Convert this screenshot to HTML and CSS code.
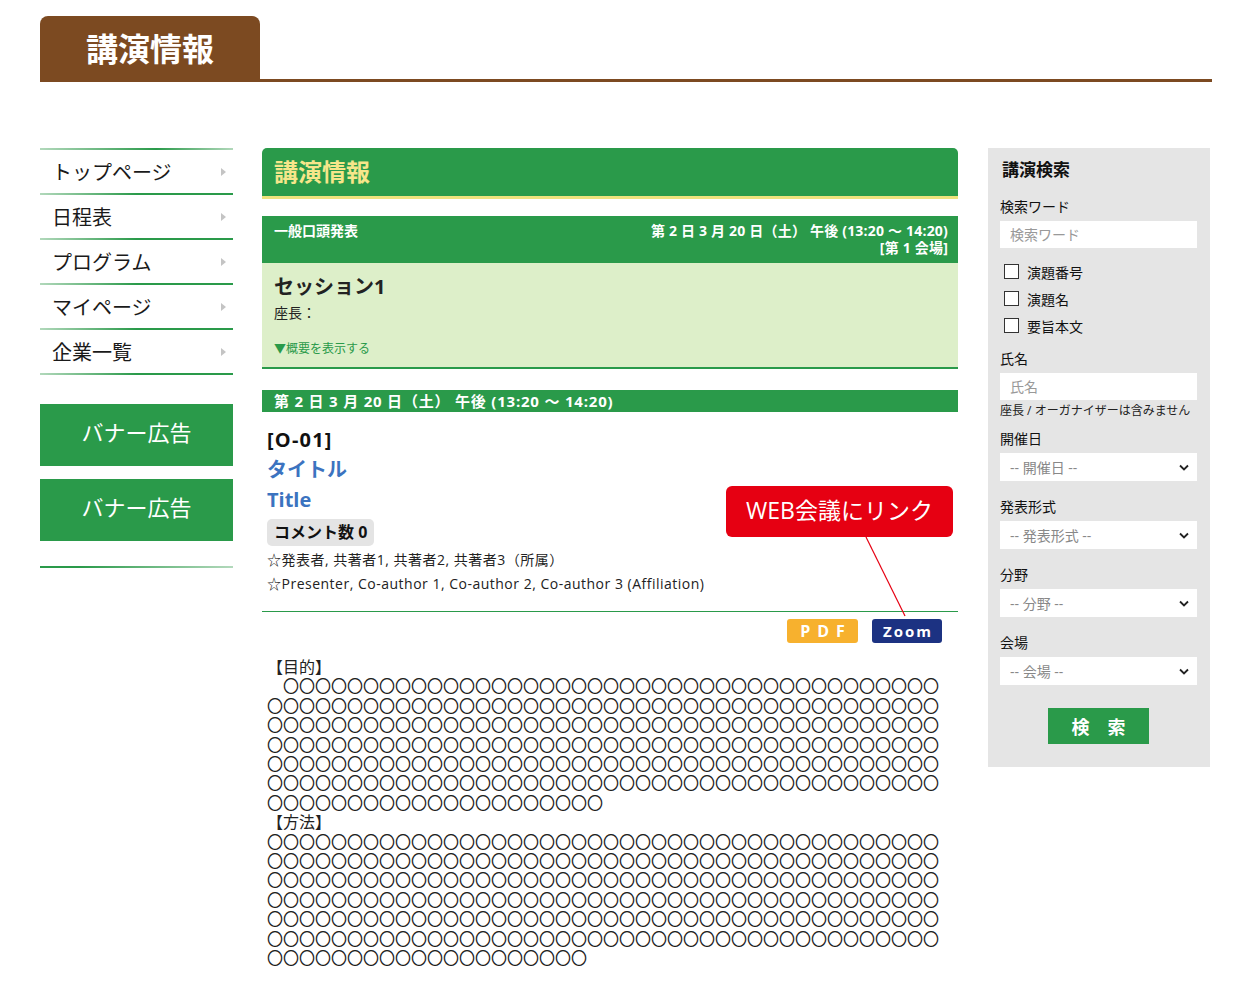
FILE: index.html
```html
<!DOCTYPE html>
<html lang="ja">
<head>
    <meta charset="UTF-8">
    <meta name="viewport" content="width=device-width, initial-scale=1.0">
    <title>講演情報</title>
    <link rel="stylesheet" href="styles.css">
</head>
<body>
    <div class="page">
        <header class="pageHead">
            <h1 class="headTab">講演情報</h1>
        </header>

        <div class="layout">
            <!-- left menu -->
            <aside class="sideNav">
                <ul class="navList">
                    <li><a href="#">トップページ<span class="arrow"></span></a></li>
                    <li><a href="#">日程表<span class="arrow"></span></a></li>
                    <li><a href="#">プログラム<span class="arrow"></span></a></li>
                    <li><a href="#">マイページ<span class="arrow"></span></a></li>
                    <li><a href="#">企業一覧<span class="arrow"></span></a></li>
                </ul>
                <a class="banner first" href="#">バナー広告</a>
                <a class="banner" href="#">バナー広告</a>
                <div class="navEnd"></div>
            </aside>

            <!-- talk detail -->
            <main class="content">
                <h2 class="contentTitle">講演情報</h2>

                <section class="session">
                    <div class="sessionHead">
                        <span class="sessionType">一般口頭発表</span>
                        <span class="sessionTime">第 2 日 3 月 20 日（土） 午後 (13:20 ～ 14:20)<br>[第 1 会場]</span>
                    </div>
                    <div class="sessionBody">
                        <h3 class="sessionName">セッション1</h3>
                        <p class="chair">座長：</p>
                        <a class="toggle" href="#">▼概要を表示する</a>
                    </div>
                </section>

                <div class="dateBar">第 2 日 3 月 20 日（土） 午後 (13:20 ～ 14:20)</div>

                <article class="talk">
                    <div class="talkInfo">
                        <div class="talkNo">[O-01]</div>
                        <div class="talkTitle">タイトル</div>
                        <div class="talkTitle">Title</div>
                        <span class="comments">コメント数 0</span>
                        <p class="authors">☆発表者, 共著者1, 共著者2, 共著者3（所属）</p>
                        <p class="authors">☆Presenter, Co-author 1, Co-author 2, Co-author 3 (Affiliation)</p>
                    </div>
                    <div class="talkLinks">
                        <a class="btn pdf" href="#">PDF</a>
                        <a class="btn zoom" href="#">Zoom</a>
                    </div>

                    <div class="callout">WEB会議にリンク</div>
                    <svg class="calloutLine" width="48" height="84" viewBox="0 0 48 84">
                        <line x1="4" y1="2" x2="43" y2="81" stroke="#e60012" stroke-width="1.2"/>
                    </svg>

                    <div class="abstract">
                        <p class="absHead">【目的】</p>
                        <p class="absText" data-fill="272" data-indent="1"></p>
                        <p class="absHead">【方法】</p>
                        <p class="absText" data-fill="272"></p>
                    </div>
                </article>
            </main>

            <!-- search panel -->
            <aside class="search">
                <h3 class="searchTitle">講演検索</h3>

                <label class="fieldLabel first">検索ワード</label>
                <input class="field" type="text" placeholder="検索ワード">

                <div class="checks">
                    <label class="check"><input type="checkbox">演題番号</label>
                    <label class="check"><input type="checkbox">演題名</label>
                    <label class="check"><input type="checkbox">要旨本文</label>
                </div>

                <label class="fieldLabel">氏名</label>
                <input class="field" type="text" placeholder="氏名">
                <p class="note">座長 / オーガナイザーは含みません</p>

                <label class="fieldLabel">開催日</label>
                <div class="selectWrap">
                    <select class="field"><option>-- 開催日 --</option></select>
                    <svg class="chevron" width="10" height="7" viewBox="0 0 10 7"><path d="M1 1.5 5 5.5 9 1.5" fill="none" stroke="#222" stroke-width="1.8"/></svg>
                </div>

                <label class="fieldLabel wide">発表形式</label>
                <div class="selectWrap">
                    <select class="field"><option>-- 発表形式 --</option></select>
                    <svg class="chevron" width="10" height="7" viewBox="0 0 10 7"><path d="M1 1.5 5 5.5 9 1.5" fill="none" stroke="#222" stroke-width="1.8"/></svg>
                </div>

                <label class="fieldLabel wide">分野</label>
                <div class="selectWrap">
                    <select class="field"><option>-- 分野 --</option></select>
                    <svg class="chevron" width="10" height="7" viewBox="0 0 10 7"><path d="M1 1.5 5 5.5 9 1.5" fill="none" stroke="#222" stroke-width="1.8"/></svg>
                </div>

                <label class="fieldLabel wide">会場</label>
                <div class="selectWrap">
                    <select class="field"><option>-- 会場 --</option></select>
                    <svg class="chevron" width="10" height="7" viewBox="0 0 10 7"><path d="M1 1.5 5 5.5 9 1.5" fill="none" stroke="#222" stroke-width="1.8"/></svg>
                </div>

                <button class="searchBtn" type="button">検　索</button>
            </aside>
        </div>
    </div>
    <script>
        // placeholder abstract text: a run of 〇 marks
        document.querySelectorAll('.absText').forEach(p => {
            let indent = p.dataset.indent ? '　' : '';
            p.textContent = indent + '〇'.repeat(parseInt(p.dataset.fill));
        });
    </script>
</body>
</html>
```

FILE: styles.css
```css
body{
    margin: 0;
    font-family: "Open Sans", "Noto Sans CJK JP", sans-serif;
    color: #222;
}
a{
    text-decoration: none;
}
.page{
    width: 1172px;
    margin-left: 40px;
    padding-top: 16px;
}

/* page header tab */
.pageHead{
    border-bottom: 3px solid #7c4a21;
}
.headTab{
    margin: 0;
    width: 220px;
    height: 63px;
    line-height: 66px;
    background: #7c4a21;
    color: #fff;
    border-radius: 8px 8px 0 0;
    font-size: 32px;
    font-weight: bold;
    text-align: center;
}

.layout{
    display: flex;
    align-items: flex-start;
    margin-top: 66px;
}

/* left menu */
.sideNav{
    width: 193px;
    flex-shrink: 0;
}
.navList{
    list-style: none;
    margin: 0;
    padding: 0;
    border-top: 2px solid;
    border-image: linear-gradient(to right, #b3d9bc, #2a9a4a 60%, #b3d9bc) 1;
}
.navList li{
    border-bottom: 2px solid;
    border-image: linear-gradient(to right, #b3d9bc, #2a9a4a 50%, #2a9a4a) 1;
}
.navList a{
    display: flex;
    justify-content: space-between;
    align-items: center;
    height: 43px;
    padding: 0 7px 0 12px;
    font-size: 20px;
    color: #1a1a1a;
}
.arrow{
    width: 0;
    height: 0;
    border-left: 5px solid #c4c4c4;
    border-top: 4px solid transparent;
    border-bottom: 4px solid transparent;
}
.banner{
    display: block;
    height: 62px;
    line-height: 56px;
    margin-top: 13px;
    background: #2a9a4a;
    color: #fff;
    font-size: 22px;
    text-align: center;
}
.banner.first{
    margin-top: 29px;
}
.navEnd{
    margin-top: 25px;
    height: 2px;
    background: linear-gradient(to right, #2a9a4a, #2a9a4a 20%, #b3d9bc);
}

/* main column */
.content{
    width: 696px;
    margin-left: 29px;
    flex-shrink: 0;
}
.contentTitle{
    margin: 0;
    height: 48px;
    line-height: 48px;
    padding-left: 12px;
    background: #2a9a4a;
    border-bottom: 3px solid #efe27d;
    border-radius: 5px 5px 0 0;
    color: #f6e68a;
    font-size: 24px;
    font-weight: bold;
}
.session{
    margin-top: 17px;
}
.sessionHead{
    display: flex;
    justify-content: space-between;
    align-items: flex-start;
    padding: 6px 10px 7px 12px;
    background: #2a9a4a;
    color: #fff;
    font-size: 14px;
    font-weight: bold;
    line-height: 17px;
}
.sessionTime{
    text-align: right;
    letter-spacing: 0.2px;
}
.sessionBody{
    padding: 11px 12px 10px;
    background: #ddefc9;
    border-bottom: 2px solid #2a9a4a;
}
.sessionName{
    margin: 0;
    font-size: 20px;
    line-height: 26px;
}
.chair{
    margin: 3px 0 0;
    font-size: 14px;
    line-height: 20px;
}
.toggle{
    display: block;
    margin-top: 18px;
    color: #2a9a4a;
    font-size: 12px;
    line-height: 16px;
}
.dateBar{
    margin-top: 21px;
    height: 22px;
    line-height: 22px;
    padding-left: 12px;
    background: #2a9a4a;
    color: #fff;
    font-size: 15px;
    font-weight: bold;
    letter-spacing: 0.8px;
}

/* one talk */
.talk{
    position: relative;
}
.talkInfo{
    padding: 13px 5px 15px;
    border-bottom: 1px solid #2a9a4a;
}
.talkNo{
    font-size: 20px;
    font-weight: bold;
    line-height: 30px;
    letter-spacing: 1.2px;
    color: #111;
}
.talkTitle{
    font-size: 20px;
    font-weight: bold;
    line-height: 30px;
    color: #3b73c0;
}
.comments{
    display: inline-block;
    margin-top: 4px;
    height: 27px;
    line-height: 27px;
    padding: 0 7px;
    background: #e4e4e4;
    border-radius: 5px;
    font-size: 16px;
    font-weight: bold;
    color: #111;
}
.authors{
    margin: 0;
    font-size: 14px;
    line-height: 24px;
    letter-spacing: 0.5px;
}
.authors:first-of-type{
    margin-top: 2px;
}
.talkLinks{
    display: flex;
    justify-content: flex-end;
    gap: 14px;
    margin-top: 7px;
    padding-right: 16px;
}
.btn{
    display: block;
    height: 24px;
    line-height: 24px;
    border-radius: 3px;
    color: #fff;
    font-size: 16px;
    font-weight: bold;
    text-align: center;
}
.pdf{
    width: 71px;
    background: #f7b12e;
    letter-spacing: 7px;
    text-indent: 7px;
}
.zoom{
    width: 70px;
    background: #1c3282;
    letter-spacing: 2px;
    text-indent: 2px;
    font-size: 15px;
}
.callout{
    position: absolute;
    left: 464px;
    top: 74px;
    width: 227px;
    height: 51px;
    line-height: 49px;
    background: #e60012;
    border-radius: 6px;
    color: #fff;
    font-size: 23px;
    text-align: center;
}
.calloutLine{
    position: absolute;
    left: 600px;
    top: 123px;
}
.abstract{
    margin-top: 14px;
    padding: 0 5px;
    font-family: "Noto Sans CJK JP", sans-serif;
    font-size: 16px;
    line-height: 19.4px;
    color: #222;
}
.abstract p{
    margin: 0;
}
.absHead{
    margin-left: -2px;
}
.absText{
    word-break: break-all;
}

/* right search panel */
.search{
    width: 222px;
    margin-left: 30px;
    flex-shrink: 0;
    box-sizing: border-box;
    padding: 11px 13px 23px 12px;
    background: #e5e5e5;
}
.searchTitle{
    margin: 0 0 0 2px;
    font-size: 17px;
    line-height: 22px;
    color: #111;
}
.fieldLabel{
    display: block;
    margin-top: 10px;
    font-size: 14px;
    line-height: 20px;
    color: #111;
}
.fieldLabel.first,
.fieldLabel.wide{
    margin-top: 16px;
}
.field{
    display: block;
    box-sizing: border-box;
    width: 197px;
    height: 27px;
    margin-top: 4px;
    padding: 0 10px;
    border: none;
    background: #fff;
    font-family: inherit;
    font-size: 14px;
    color: #888;
    outline: none;
}
.field::placeholder{
    color: #999;
}
.checks{
    margin-top: 10px;
}
.check{
    display: flex;
    align-items: center;
    height: 27px;
    font-size: 14px;
    color: #111;
}
.check input{
    appearance: none;
    width: 15px;
    height: 15px;
    margin: 0 8px 0 4px;
    border: 1px solid #333;
    background: #fff;
}
.note{
    margin: 3px 0 0;
    font-size: 12px;
    line-height: 16px;
    color: #222;
}
.selectWrap{
    position: relative;
}
.selectWrap .field{
    appearance: none;
    height: 28px;
}
.chevron{
    position: absolute;
    right: 8px;
    top: 11px;
}
.searchBtn{
    display: block;
    width: 101px;
    height: 36px;
    margin: 23px auto 0;
    border: none;
    background: #2a9a4a;
    color: #fff;
    font-family: inherit;
    font-size: 18px;
    font-weight: bold;
}
```
